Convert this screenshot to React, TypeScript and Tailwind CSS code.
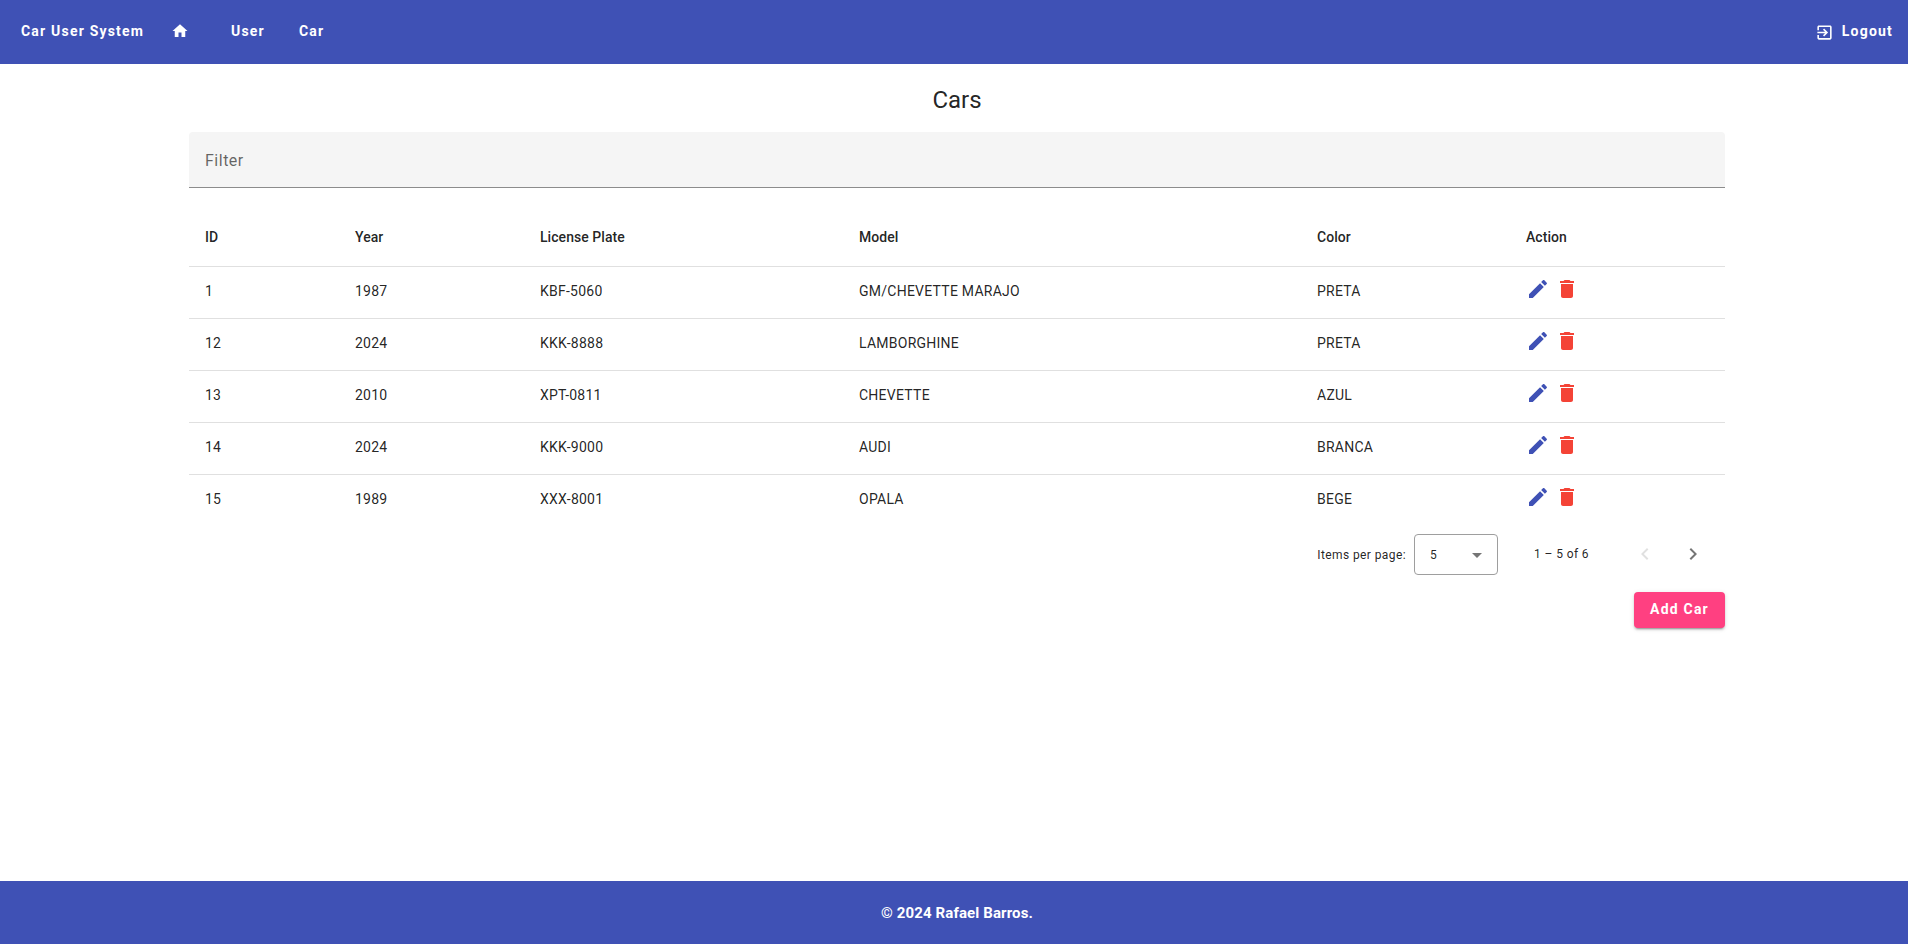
import React from "react";

type Car = { id: number; year: number; plate: string; model: string; color: string };

const cars: Car[] = [
  { id: 1, year: 1987, plate: "KBF-5060", model: "GM/CHEVETTE MARAJO", color: "PRETA" },
  { id: 12, year: 2024, plate: "KKK-8888", model: "LAMBORGHINE", color: "PRETA" },
  { id: 13, year: 2010, plate: "XPT-0811", model: "CHEVETTE", color: "AZUL" },
  { id: 14, year: 2024, plate: "KKK-9000", model: "AUDI", color: "BRANCA" },
  { id: 15, year: 1989, plate: "XXX-8001", model: "OPALA", color: "BEGE" },
];

const paths = {
  home: "M10 20v-6h4v6h5v-8h3L12 3 2 12h3v8z",
  exit: "M10.09 15.59L11.5 17l5-5-5-5-1.41 1.41L12.67 11H3v2h9.67l-2.58 2.59zM19 3H5c-1.11 0-2 .9-2 2v4h2V5h14v14H5v-4H3v4c0 1.1.89 2 2 2h14c1.1 0 2-.9 2-2V5c0-1.1-.9-2-2-2z",
  edit: "M3 17.25V21h3.75L17.81 9.94l-3.75-3.75L3 17.25zM20.71 7.04c.39-.39.39-1.02 0-1.41l-2.34-2.34c-.39-.39-1.02-.39-1.41 0l-1.83 1.83 3.75 3.75 1.83-1.83z",
  trash: "M6 19c0 1.1.9 2 2 2h8c1.1 0 2-.9 2-2V7H6v12zM19 4h-3.5l-1-1h-5l-1 1H5v2h14V4z",
  prev: "M15.41 7.41L14 6l-6 6 6 6 1.41-1.41L10.83 12z",
  next: "M10 6L8.59 7.41 13.17 12l-4.58 4.59L10 18l6-6z",
};

function Icon({ name, className }: { name: keyof typeof paths; className: string }) {
  return (
    <svg viewBox="0 0 24 24" fill="currentColor" className={`shrink-0 ${className}`}>
      <path d={paths[name]} />
    </svg>
  );
}

const columns = "grid grid-cols-[150px_185px_319px_458px_209px_1fr] [&>*]:pl-4";

export default function App() {
  return (
    <div className="flex h-[944px] w-full flex-col overflow-hidden bg-white font-['Roboto',sans-serif] text-sm text-black/87">
      <header className="flex h-16 shrink-0 items-center bg-[#3f51b5] pb-0.5 pr-[15px] pl-[21px] font-bold tracking-[1.2px] text-white">
        <span className="w-[150px]">Car User System</span>
        <Icon name="home" className="size-[18px]" />
        <span className="ml-[42px] w-[68px]">User</span>
        <span>Car</span>
        <div className="ml-auto flex items-center gap-2">
          <Icon name="exit" className="mt-0.5 size-[19px]" />
          <span>Logout</span>
        </div>
      </header>

      <main className="ml-[189px] flex w-[1536px] grow flex-col">
        <h1 className="mt-5 text-center text-2xl leading-8">Cars</h1>
        <div className="mt-4 flex h-14 shrink-0 items-center rounded-t border-b border-[#8c8c8c] bg-[#f5f5f5] px-4 pt-0.5 text-base tracking-[0.5px] text-black/60">
          Filter
        </div>

        <section className="mt-[23px]">
          <div className={`${columns} h-14 items-center border-b border-[#e0e0e0] pb-[3px] font-medium tracking-[0.05px]`}>
            <span>ID</span>
            <span>Year</span>
            <span>License Plate</span>
            <span>Model</span>
            <span>Color</span>
            <span>Action</span>
          </div>
          {cars.map((car) => (
            <div
              key={car.id}
              className={`${columns} h-[52px] items-center border-b border-[#e0e0e0] pb-[3px] tracking-[0.25px] last:border-transparent`}
            >
              <span>{car.id}</span>
              <span>{car.year}</span>
              <span>{car.plate}</span>
              <span>{car.model}</span>
              <span>{car.color}</span>
              <span className="flex gap-[5px] pb-1">
                <Icon name="edit" className="size-6 text-[#3f51b5]" />
                <Icon name="trash" className="size-6 text-[#f44336]" />
              </span>
            </div>
          ))}
        </section>

        <div className="flex h-14 shrink-0 items-center justify-end pr-2 pb-0.5 text-xs tracking-[0.4px]">
          <span className="pt-0.5">Items per page:</span>
          <div className="ml-2 flex h-[41px] w-[84px] items-center justify-between rounded border border-[#9e9e9e] pt-0.5 pr-[15px] pl-[15px]">
            <span>5</span>
            <svg viewBox="0 0 10 5" className="h-[5px] w-[10px] fill-[#757575]">
              <path d="M0 0h10L5 5z" />
            </svg>
          </div>
          <span className="ml-9">1 – 5 of 6</span>
          <Icon name="prev" className="ml-11 size-6 text-black/12" />
          <Icon name="next" className="mr-3 ml-6 size-6 text-black/54" />
        </div>

        <button className="mt-[9px] h-9 w-[91px] self-end rounded bg-[#ff4081] pb-0.5 text-center font-bold tracking-[1.2px] text-white shadow-[0_3px_1px_-2px_rgba(0,0,0,0.2),0_2px_2px_0_rgba(0,0,0,0.14),0_1px_5px_0_rgba(0,0,0,0.12)]">
          Add Car
        </button>
      </main>

      <footer className="flex h-[63px] shrink-0 items-center justify-center bg-[#3f51b5] pt-0.5 pl-1.5 text-[15px] font-bold tracking-[0.12px] text-white">
        © 2024 Rafael Barros.
      </footer>
    </div>
  );
}
